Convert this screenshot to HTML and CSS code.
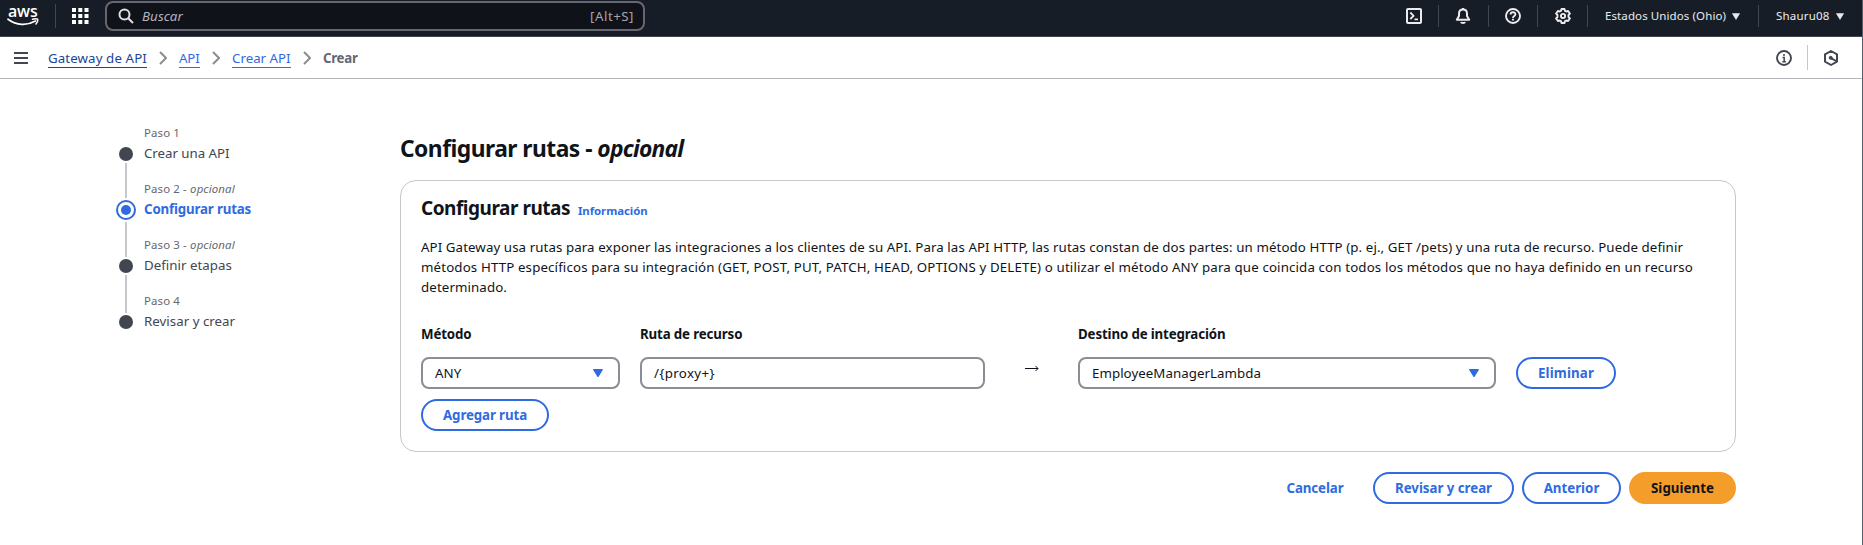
FILE: index.html
```
<!DOCTYPE html>
<html lang="es">
<head>
<meta charset="utf-8">
<title>Configurar rutas</title>
<link rel="stylesheet" href="styles.css">
</head>
<body>
<div class="app">
  <header class="topbar">
    <div class="logo">
      <span class="logo-text">aws</span>
      <svg class="logo-smile" width="32" height="9" viewBox="0 0 32 9" fill="none" stroke="#fff" stroke-width="1.7" stroke-linecap="round"><path d="M1 1.2C9.500 7.600 20 7.800 28.500 3"/><path d="M25.500 1.300C27.500.700 29.500.600 30.600 1.200C31 2.600 30.300 4.600 29 6" stroke-width="1.500"/></svg>
    </div>
    <i class="vline vline-logo"></i>
    <svg class="grid-icon" width="17" height="17" viewBox="0 0 17 17" fill="#fff"><path d="M0 0h4v4H0zM6.300 0h4v4h-4zM12.500 0h4v4h-4zM0 6h4v4H0zM6.300 6h4v4h-4zM12.500 6h4v4h-4zM0 12h4v4H0zM6.300 12h4v4h-4zM12.500 12h4v4h-4z"/></svg>
    <div class="search">
      <svg width="16" height="16" viewBox="0 0 16 16" fill="none" stroke="#dedee3" stroke-width="2"><circle cx="6.500" cy="6.500" r="5"/><path d="M10.200 10.200L15 15"/></svg>
      <span class="search-text">Buscar</span>
      <span class="search-key">[Alt+S]</span>
    </div>
    <nav class="tools">
      <span class="tool"><svg width="16" height="16" viewBox="0 0 16 16" fill="none" stroke="#ebebf0" stroke-width="2" stroke-linejoin="round"><rect x="1" y="1" width="14" height="14" rx="1"/><path d="M4.300 4.500L7.600 7.800L4.300 11M8.500 11.300h3.500" stroke-width="1.800"/></svg></span>
      <span class="tool"><svg width="16" height="16" viewBox="0 0 16 16" fill="none" stroke="#ebebf0" stroke-width="2" stroke-linejoin="round"><path d="M8 1.500C5.500 1.500 4 3.300 4 5.800V8L1.800 11.700H14.200L12 8V5.800C12 3.300 10.500 1.500 8 1.500Z"/><path d="M6 14c.4 1.300 3.600 1.300 4 0M8 0v2"/></svg></span>
      <span class="tool"><svg width="16" height="16" viewBox="0 0 16 16" fill="none" stroke="#ebebf0" stroke-width="1.900"><circle cx="8" cy="8" r="7"/><path d="M5.600 6.500C5.600 3.500 10.400 3.600 10.400 6.300C10.400 8 8 7.900 8 9.900M8 10.700v1.800"/></svg></span>
      <span class="tool"><svg width="16" height="16" viewBox="0 0 16 16" fill="none" stroke="#ebebf0" stroke-width="1.900" stroke-linejoin="round"><path d="M6.500 1H9.500L10 2.900L11.200 3.500L13.100 3L14.900 5.500L13.500 7V9L14.900 10.500L13.100 13L11.200 12.500L10 13.100L9.500 15H6.500L6 13.100L4.800 12.500L2.900 13L1.100 10.500L2.500 9V7L1.100 5.500L2.900 3L4.800 3.500L6 2.900Z"/><circle cx="8" cy="8" r="2.100"/></svg></span>
      <span class="menu menu-region"><span class="region">Estados Unidos (Ohio)</span><svg width="8" height="7" viewBox="0 0 8 7"><path d="M.3.500h7.400L4 6.500z" fill="#ebebf0" stroke="#ebebf0" stroke-width=".5"/></svg></span>
      <span class="menu menu-user"><span class="user">Shauru08</span><svg width="8" height="7" viewBox="0 0 8 7"><path d="M.3.500h7.400L4 6.500z" fill="#ebebf0" stroke="#ebebf0" stroke-width=".5"/></svg></span>
    </nav>
  </header>

  <div class="subbar">
    <svg class="burger" width="14" height="12" viewBox="0 0 14 12" fill="#424650"><path d="M0 0h14v2H0zM0 5h14v2H0zM0 10h14v2H0z"/></svg>
    <nav class="crumbs">
      <a class="crumb crumb-home">Gateway de API</a>
      <svg class="chev" width="8" height="14" viewBox="0 0 8 14"><path d="M1 1l6 6l-6 6"/></svg>
      <a class="crumb crumb-api">API</a>
      <svg class="chev" width="8" height="14" viewBox="0 0 8 14"><path d="M1 1l6 6l-6 6"/></svg>
      <a class="crumb crumb-create">Crear API</a>
      <svg class="chev" width="8" height="14" viewBox="0 0 8 14"><path d="M1 1l6 6l-6 6"/></svg>
      <span class="crumb-now">Crear</span>
    </nav>
    <div class="side-tools">
      <svg width="16" height="16" viewBox="0 0 16 16" fill="none" stroke="#424650" stroke-width="1.900"><circle cx="8" cy="8" r="7"/><path d="M6.500 7.500H8.200V12M6.300 11.800h3.600M8 4v2" stroke-width="1.500"/></svg>
      <i class="vline vline-light"></i>
      <svg width="16" height="16" viewBox="0 0 16 16" fill="none" stroke="#424650" stroke-width="2" stroke-linejoin="round"><path d="M8 1L14 4.400V11.600L8 15L2 11.600V4.400Z"/><path d="M7.500 7.800L14 11.500"/><circle cx="7.700" cy="7.800" r="1.500" fill="#424650" stroke-width="1"/></svg>
    </div>
  </div>

  <div class="body">
    <ol class="steps">
      <li class="step"><span class="step-no">Paso 1</span><span class="rail"><i class="dot"></i></span><span class="step-name name-1">Crear una API</span><i class="link"></i></li>
      <li class="step"><span class="step-no">Paso 2 - <em>opcional</em></span><span class="rail"><i class="dot dot-on"></i></span><span class="step-name name-on">Configurar rutas</span><i class="link link-on"></i></li>
      <li class="step"><span class="step-no">Paso 3 - <em>opcional</em></span><span class="rail"><i class="dot"></i></span><span class="step-name">Definir etapas</span><i class="link"></i></li>
      <li class="step"><span class="step-no">Paso 4</span><span class="rail"><i class="dot"></i></span><span class="step-name">Revisar y crear</span></li>
    </ol>

    <main class="main">
      <h1 class="title">Configurar rutas - <em>opcional</em></h1>
      <section class="card">
        <div class="card-head"><h2 class="card-title">Configurar rutas</h2><a class="info">Información</a></div>
        <p class="desc"><span class="desc-1">API Gateway usa rutas para exponer las integraciones a los clientes de su API. Para las API HTTP, las rutas constan de dos partes: un método HTTP (p. ej., GET /pets) y una ruta de recurso. Puede definir</span><br><span class="desc-2">métodos HTTP específicos para su integración (GET, POST, PUT, PATCH, HEAD, OPTIONS y DELETE) o utilizar el método ANY para que coincida con todos los métodos que no haya definido en un recurso</span><br>determinado.</p>
        <div class="route">
          <label class="label label-method">Método</label>
          <label class="label label-path">Ruta de recurso</label>
          <span></span>
          <label class="label label-target">Destino de integración</label>
          <span></span>
          <div class="field">ANY<svg width="10" height="8" viewBox="0 0 10 8"><path d="M.8.700h8.400L5 7.300z"/></svg></div>
          <div class="field path">/{proxy+}</div>
          <svg class="arrow" width="14" height="8" viewBox="0 0 14 8" fill="none" stroke="#0f141a" stroke-width="1"><path d="M0 4.500h13M10.500 2l2.500 2.500l-2.500 2.500"/></svg>
          <div class="field">EmployeeManagerLambda<svg width="10" height="8" viewBox="0 0 10 8"><path d="M.8.700h8.400L5 7.300z"/></svg></div>
          <button class="btn btn-remove">Eliminar</button>
        </div>
        <button class="btn btn-add">Agregar ruta</button>
      </section>
      <footer class="actions">
        <button class="btn btn-cancel">Cancelar</button>
        <button class="btn btn-review">Revisar y crear</button>
        <button class="btn btn-prev">Anterior</button>
        <button class="btn btn-next">Siguiente</button>
      </footer>
    </main>
  </div>
</div>
</body>
</html>
```
FILE: styles.css
```
* { box-sizing: border-box; }
body {
  margin: 0;
  background: #fff;
  color: #0f141a;
  font: 13.3px/20px "Noto Sans", "Open Sans", sans-serif;
}
svg { display: block; flex: none; }
.app { height: 545px; border-right: 1px solid #56606c; overflow: hidden; }
.vline { width: 1px; flex: none; background: #424650; }

/* Top bar */
.topbar {
  display: flex;
  align-items: flex-start;
  height: 37px;
  background: #161d26;
  border-bottom: 1px solid #424650;
  color: #ebebf0;
}
.logo { width: 32px; margin: 6px 0 0 7px; }
.logo-text {
  display: block;
  height: 12px;
  padding-left: 1px;
  font: 600 16px/11px "Open Sans", sans-serif;
  letter-spacing: -0.2px;
  color: #fff;
}
.vline-logo { height: 24px; margin: 4px 16px 0; }
.grid-icon { margin-top: 8px; }
.search {
  display: flex;
  align-items: center;
  width: 540px;
  height: 30px;
  margin: 1px 0 0 16px;
  padding: 0 9px 0 11px;
  border: 2px solid #656871;
  border-radius: 8px;
  background: #0f1219;
  color: #a4a4ad;
}
.search-text { margin-left: 8px; font-style: italic; color: #b4b4bb; letter-spacing: .1px; }
.search-key { margin-left: auto; letter-spacing: .5px; }
.tools { display: flex; margin-left: auto; padding-top: 5px; font-size: 11.5px; }
.tool { display: flex; align-items: center; justify-content: center; width: 49.700px; height: 22px; border-right: 1px solid #424650; }
.menu { display: flex; align-items: center; gap: 6px; height: 22px; padding: 0 17px; }
.menu-region { width: 171px; border-right: 1px solid #424650; }
.menu-user { width: 103px; }
.region { width: 121px; letter-spacing: .1px; white-space: nowrap; }
.user { width: 54px; letter-spacing: .18px; }

/* Breadcrumb bar */
.subbar { display: flex; align-items: center; height: 42px; border-bottom: 1px solid #b4b4bb; }
.burger { margin-left: 14px; }
.crumbs { display: flex; align-items: center; margin-left: 20px; }
.crumb { height: 20px; border-bottom: 1px solid #2f6bdf; color: #2f6bdf; margin-top: 1px; white-space: nowrap; }
.crumb-home { width: 99px; letter-spacing: .1px; color: #1f4496; border-color: #1f4496; }
.crumb-api { width: 21px; letter-spacing: -.15px; }
.crumb-create { width: 59px; }
.crumb-now { font-weight: 700; color: #656871; letter-spacing: -.3px; }
.chev { margin: 0 12px; fill: none; stroke: #8c8c94; stroke-width: 2; }
.side-tools { display: flex; align-items: center; margin: 0 23px 0 auto; }
.vline-light { height: 25px; margin: 0 15px; background: #c6c6cd; }

/* Page body */
.body { display: flex; padding-top: 44px; }
.steps { width: 284px; margin: 0 0 0 116px; padding: 0; list-style: none; }
.step {
  display: grid;
  grid-template-columns: 20px 1fr;
  grid-template-rows: 20px 20px 16px;
  column-gap: 8px;
  position: relative;
  color: #424650;
}
.step-no { grid-column: 2; font-size: 11.400px; color: #656871; letter-spacing: .15px; }
.step-name { letter-spacing: .02px; }
.name-1 { letter-spacing: -.03px; }
.name-on { font-weight: 700; color: #2f6bdf; letter-spacing: -.16px; }
.rail { display: flex; align-items: center; justify-content: center; height: 22px; }
.dot { width: 14px; height: 14px; border-radius: 50%; background: #424650; }
.dot-on { width: 20px; height: 20px; border: 2px solid #2f6bdf; background: #2f6bdf; background-clip: content-box; padding: 3px; }
.link { position: absolute; left: 9px; top: 40px; width: 2px; height: 35px; background: #c6c6cd; }
.step:nth-child(3) .link { height: 38px; }
.link-on { top: 43px; }
.main { width: 1336px; }
.title { margin: 11px 0 16px; font: 700 22.800px/30px "Noto Sans", sans-serif; letter-spacing: -.52px; }
.title em { letter-spacing: -.77px; }
.card { height: 272px; padding: 15px 20px 0; border: 1px solid #c6c6cd; border-radius: 16px; }
.card-head { display: flex; align-items: baseline; height: 41px; }
.card-title { width: 149px; margin: 0 8px 0 0; font: 700 19px/24px "Noto Sans", sans-serif; letter-spacing: -.48px; white-space: nowrap; }
.info { font-size: 11.400px; font-weight: 700; color: #2f6bdf; letter-spacing: -.06px; }
.desc { margin: 0; white-space: nowrap; letter-spacing: .1px; }
.desc-1 { letter-spacing: .085px; }
.desc-2 { letter-spacing: .135px; }
.route {
  display: grid;
  grid-template-columns: 199px 345px 53px 418px 100px;
  grid-template-rows: 20px 32px;
  gap: 13px 20px;
  align-items: center;
  margin-top: 27px;
}
.label { font-weight: 700; letter-spacing: -.14px; }
.field {
  display: flex;
  align-items: center;
  justify-content: space-between;
  height: 32px;
  padding: 0 15px 0 12px;
  border: 2px solid #8c8c94;
  border-radius: 8px;
  letter-spacing: .045px;
}
.field svg { fill: #2f6bdf; stroke: #2f6bdf; stroke-width: 1.400; stroke-linejoin: round; }
.path { letter-spacing: .35px; }
.arrow { justify-self: center; margin-top: -10px; }
.btn {
  height: 32px;
  padding: 0;
  border: 2px solid #2f6bdf;
  border-radius: 16px;
  background: #fff;
  color: #2f6bdf;
  font: 700 13.300px/20px "Noto Sans", sans-serif;
}
.btn-remove { letter-spacing: .14px; }
.btn-add { width: 128px; margin-top: 10px; letter-spacing: -.11px; }
.actions { display: flex; gap: 8px; padding-top: 20px; justify-content: flex-end; }
.btn-cancel { width: 100px; border-color: transparent; background: none; letter-spacing: -.1px; }
.btn-review { width: 141px; letter-spacing: -.03px; }
.btn-prev { width: 99px; }
.btn-next { width: 107px; border-color: #f59d2a; background: #f59d2a; color: #0f141a; letter-spacing: .04px; }
```
